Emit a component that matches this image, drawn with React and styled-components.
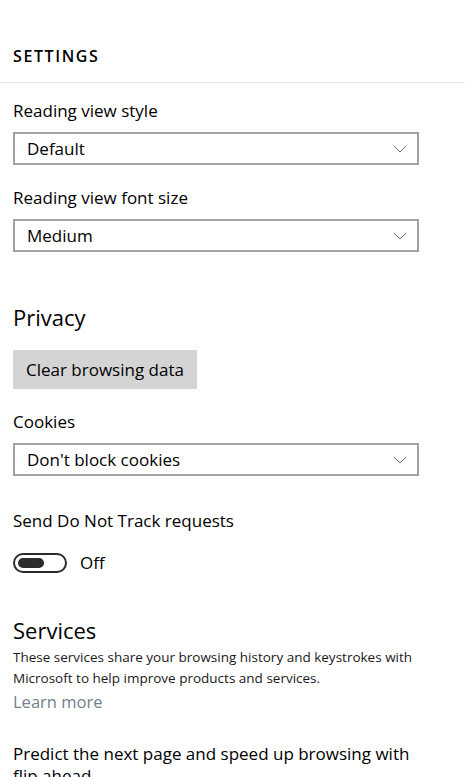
import React from "react";
import styled, { createGlobalStyle } from "styled-components";

const GlobalStyle = createGlobalStyle`
	body {
		margin: 0;
		background: #ffffff;
		font-family: "Segoe UI", "Open Sans", sans-serif;
		color: #000000;
	}
`;

const selectFields = [
	{ label: "Reading view style", value: "Default" },
	{ label: "Reading view font size", value: "Medium" },
];

const App = () => {
	return (
		<>
			<GlobalStyle />
			<Page>
				<Header>
					<HeaderTitle>SETTINGS</HeaderTitle>
				</Header>
				<Content>
					{selectFields.map((field, index) => (
						<Field key={index} $gap={index === 0 ? 16 : 21}>
							<Label>{field.label}</Label>
							<Dropdown value={field.value} />
						</Field>
					))}

					<SectionTitle $top={50} $bottom={18}>
						Privacy
					</SectionTitle>
					<GrayButton>Clear browsing data</GrayButton>

					<Field $gap={21}>
						<Label>Cookies</Label>
						<Dropdown value="Don't block cookies" />
					</Field>

					<Field $gap={33}>
						<Label>Send Do Not Track requests</Label>
						<ToggleRow>
							<Toggle>
								<Knob />
							</Toggle>
							<ToggleText>Off</ToggleText>
						</ToggleRow>
					</Field>

					<SectionTitle $top={40} $bottom={2}>
						Services
					</SectionTitle>
					<Description>
						These services share your browsing history and keystrokes with
						Microsoft to help improve products and services.
					</Description>
					<LearnMore>Learn more</LearnMore>

					<Predict>
						Predict the next page and speed up browsing with flip ahead
					</Predict>
				</Content>
			</Page>
		</>
	);
};

const Dropdown = ({ value }) => (
	<SelectBox>
		<SelectText>{value}</SelectText>
		<Chevron viewBox="0 0 14 8">
			<polyline points="1,1 7,7 13,1" />
		</Chevron>
	</SelectBox>
);

export default App;

const Page = styled.div`
	width: 465px;
	height: 777px;
	overflow: hidden;
`;

const Header = styled.div`
	padding: 44px 13px 13px;
	border-bottom: 1px solid #e3e3e3;
`;

const HeaderTitle = styled.h1`
	margin: 0;
	font-size: 16px;
	line-height: 25px;
	font-weight: 600;
	letter-spacing: 1.6px;
`;

const Content = styled.div`
	width: 406px;
	padding: 0 0 0 13px;
`;

const Field = styled.div`
	display: flex;
	flex-direction: column;
	padding-top: ${(p) => p.$gap}px;
`;

const Label = styled.div`
	font-size: 17px;
	line-height: 24px;
	margin-bottom: 9px;
`;

const SelectBox = styled.div`
	display: flex;
	align-items: center;
	justify-content: space-between;
	height: 33px;
	box-sizing: border-box;
	border: 2px solid #a3a3a3;
	padding: 0 10px 0 12px;
`;

const SelectText = styled.span`
	font-size: 17px;
`;

const Chevron = styled.svg`
	width: 14px;
	height: 8px;
	fill: none;
	stroke: #6e6e6e;
	stroke-width: 1;
`;

const SectionTitle = styled.h2`
	margin: ${(p) => p.$top}px 0 ${(p) => p.$bottom}px;
	font-size: 22px;
	line-height: 30px;
	font-weight: 400;
`;

const GrayButton = styled.button`
	display: block;
	height: 39px;
	padding: 0 13px;
	border: none;
	background: #d4d4d4;
	font-family: inherit;
	font-size: 17px;
	color: #000000;
`;

const ToggleRow = styled.div`
	display: flex;
	align-items: center;
	gap: 13px;
	margin-top: 9px;
`;

const Toggle = styled.span`
	display: flex;
	align-items: center;
	width: 54px;
	height: 20px;
	box-sizing: border-box;
	border: 2px solid #2b2b2b;
	border-radius: 10px;
	padding-left: 3px;
`;

const Knob = styled.span`
	width: 26px;
	height: 10px;
	border-radius: 5px;
	background: #2b2b2b;
`;

const ToggleText = styled.span`
	font-size: 17px;
	line-height: 24px;
`;

const Description = styled.p`
	margin: 0 -10px 0 0;
	font-size: 13.5px;
	line-height: 21px;
	color: #1a1a1a;
`;

const LearnMore = styled.a`
	display: block;
	margin-top: 1px;
	font-size: 16.5px;
	line-height: 24px;
	color: #74808e;
`;

const Predict = styled.p`
	margin: 29px 0 0;
	font-size: 17px;
	line-height: 22px;
`;
